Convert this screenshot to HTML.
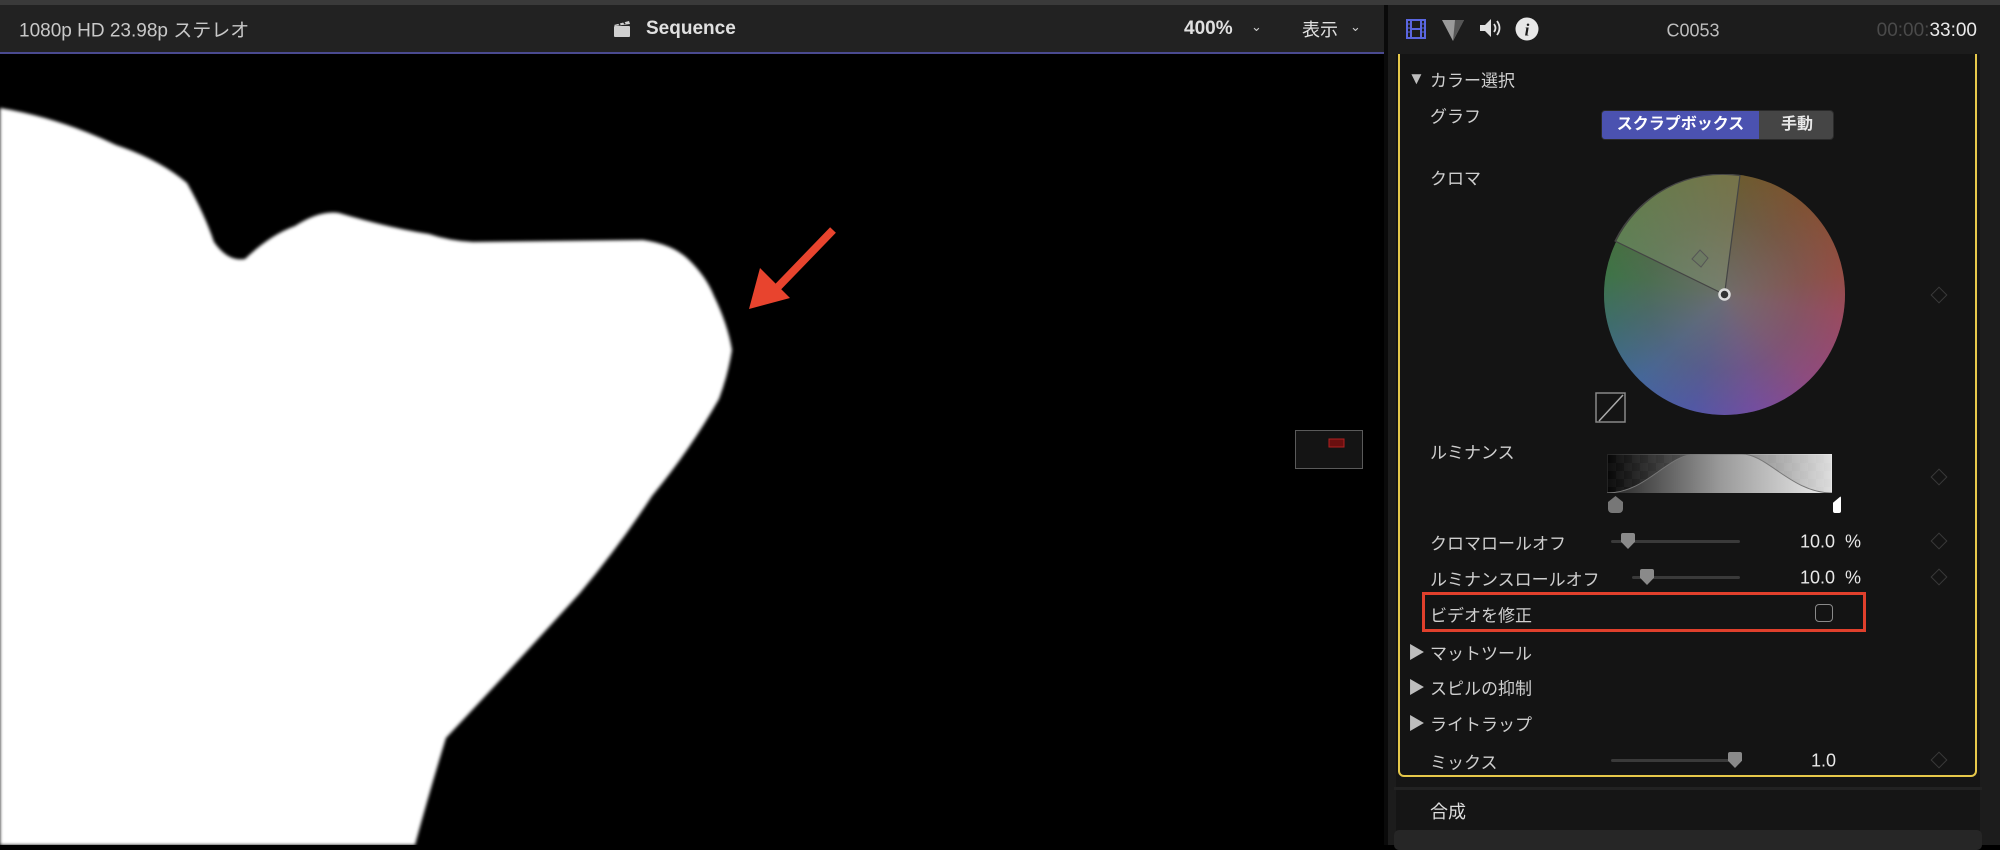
<!DOCTYPE html>
<html><head><meta charset="utf-8"><style>
*{margin:0;padding:0;box-sizing:border-box}
body{width:2000px;height:845px;overflow:hidden;background:#000;font-family:"Liberation Sans","Noto Sans CJK JP",sans-serif;color:#d0d0d0;position:relative}
.a{position:absolute;white-space:nowrap}
.lbl{font-size:17px;color:#cfcfcf;transform:translateY(-50%)}
.dia{position:absolute;width:12px;height:12px;border:1.5px solid #3a3a3a;transform:translate(-50%,-50%) rotate(45deg)}
.tri{position:absolute;font-size:17px;color:#bdbdbd;transform:translateY(-50%)}
.track{position:absolute;height:3px;background:#3a3a3a;border-radius:2px}
.thumb{position:absolute;width:14px;height:16px;background:#8a8a8a;clip-path:polygon(0 0,100% 0,100% 55%,50% 100%,0 55%);transform:translate(-50%,-50%);border-radius:2px}
</style></head><body>
<div class="a" style="left:0;top:0;width:2000px;height:5px;background:#3a3a3a"></div>
<div class="a" style="left:0;top:5px;width:1384px;height:47px;background:#222"></div>
<div class="a" style="left:0;top:52px;width:1384px;height:2px;background:#4a4a90"></div>
<div class="a lbl" style="left:19px;top:29px;font-size:19px;color:#c8c8c8">1080p HD 23.98p ステレオ</div>
<svg class="a" style="left:613px;top:20px" width="18" height="18" viewBox="0 0 18 18"><rect x="1" y="6" width="16" height="11" rx="1" fill="#cfcfcf"/><path d="M1 5 L16 1 L17 4 L2 6Z" fill="#cfcfcf"/><path d="M5 2 L7 5 M10 1 L12 4" stroke="#222" stroke-width="1.5"/></svg>
<div class="a lbl" style="left:646px;top:29px;font-size:19px;color:#e0e0e0;font-weight:bold">Sequence</div>
<div class="a lbl" style="left:1184px;top:29px;font-size:19px;color:#e0e0e0;font-weight:bold">400%</div>
<div class="a lbl" style="left:1251px;top:27px;font-size:13px;color:#ccc">⌄</div>
<div class="a lbl" style="left:1302px;top:29px;font-size:18px;color:#e0e0e0">表示</div>
<div class="a lbl" style="left:1350px;top:27px;font-size:13px;color:#ccc">⌄</div>
<svg class="a" style="left:0;top:54px" width="1384" height="791" viewBox="0 54 1384 791">
<path d="M0 108 Q60 118 116 145 Q160 160 187 183 Q205 215 214 242 Q228 262 245 259 Q270 235 295 226 Q320 210 339 213 Q390 228 429 234 Q450 241 473 242 L643 240 Q672 244 688 259 Q706 276 714 296 Q728 325 732 350 Q728 375 719 399 Q690 450 652 496 Q620 545 580 593 Q510 670 446 738 Q430 790 415 845 L0 845Z" fill="#fff" style="filter:blur(1.5px)"/>
<path d="M833 230 L775 290" stroke="#e8442e" stroke-width="8"/>
<path d="M749 309 L760 268 L790 298Z" fill="#e8442e"/>
<rect x="1295.5" y="430.5" width="67" height="38" fill="#141414" stroke="#5a5a5a"/>
<rect x="1329" y="439" width="15" height="8" fill="#6a0f0f" stroke="#b02020"/>
</svg>
<div class="a" style="left:1384px;top:5px;width:616px;height:840px;background:#1c1c1c"></div>
<div class="a" style="left:1384px;top:5px;width:4px;height:840px;background:#0a0a0a"></div>
<div class="a" style="left:1396px;top:54px;width:584px;height:791px;background:#151515"></div>
<svg class="a" style="left:1405px;top:18px" width="22" height="22" viewBox="0 0 22 22"><rect x="2" y="2" width="18" height="18" fill="none" stroke="#5a66e0" stroke-width="2"/><path d="M6 2V20M16 2V20M6 11H16" stroke="#5a66e0" stroke-width="2"/><path d="M2 6h4M2 10h4M2 14h4M16 6h4M16 10h4M16 14h4" stroke="#5a66e0"/></svg>
<svg class="a" style="left:1441px;top:18px" width="24" height="24" viewBox="0 0 24 24"><path d="M1 2 L23 2 L12 23Z" fill="#9a9a9a"/><path d="M12 23 L23 2 L14 2Z" fill="#555"/></svg>
<svg class="a" style="left:1478px;top:17px" width="26" height="22" viewBox="0 0 26 22"><path d="M2 8h5l6-6v18l-6-6H2z" fill="#e0e0e0"/><path d="M16 7q3 4 0 8M19 4q5 7 0 14" stroke="#e0e0e0" stroke-width="1.8" fill="none"/></svg>
<svg class="a" style="left:1515px;top:17px" width="24" height="24" viewBox="0 0 24 24"><circle cx="12" cy="12" r="11.5" fill="#e8e8e8"/><text x="12" y="18.5" font-size="17" font-style="italic" font-weight="bold" font-family="Liberation Serif,serif" text-anchor="middle" fill="#1c1c1c">i</text></svg>
<div class="a lbl" style="left:1693px;top:31px;font-size:18px;color:#bdbdbd;transform:translate(-50%,-50%)">C0053</div>
<div class="a lbl" style="right:23px;top:31px;font-size:19px;color:#eaeaea"><span style="color:#4a4a4a">00:00:</span>33:00</div>
<div class="a" style="left:1398px;top:54px;width:579px;height:723px;border:2px solid #e6c84a;border-top:none;border-radius:0 0 6px 6px;background:#141414"></div>
<div class="tri a" style="left:1408px;top:79px">▼</div>
<div class="a lbl" style="left:1430px;top:79px">カラー選択</div>
<div class="a lbl" style="left:1430px;top:115px">グラフ</div>
<div class="a" style="left:1601px;top:110px;width:233px;height:30px;border-radius:4px;background:#454545;overflow:hidden;border:1px solid #2a2a2a">
<div style="position:absolute;left:0;top:0;width:157px;height:30px;background:#4b52b0;color:#fff;font-size:16px;font-weight:bold;line-height:28px;text-align:center">スクラプボックス</div>
<div style="position:absolute;left:157px;top:0;width:76px;height:30px;color:#e8e8e8;font-size:16px;font-weight:bold;line-height:28px;text-align:center">手動</div></div>
<div class="a lbl" style="left:1430px;top:177px">クロマ</div>
<div class="a" style="left:1604px;top:174px;width:241px;height:241px;border-radius:50%;background:conic-gradient(from 0deg,#6a5a18,#8a4a1e 40deg,#a84438 80deg,#b0405e 100deg,#a0408a 135deg,#7a44b8 165deg,#4a52c0 195deg,#3868b0 225deg,#2e7070 255deg,#2e7a3a 280deg,#4a6a28 320deg,#6a5a18)"></div>
<div class="a" style="left:1604px;top:174px;width:241px;height:241px;border-radius:50%;background:radial-gradient(circle,rgba(110,110,110,0.95) 0%,rgba(100,100,100,0.55) 45%,rgba(90,90,90,0) 100%)"></div>
<svg class="a" style="left:1604px;top:174px" width="241" height="241" viewBox="0 0 241 241"><path d="M120.5 120.5 L11 67 A120 120 0 0 1 136 1.5Z" fill="rgba(140,160,120,0.35)" stroke="#444" stroke-width="1.2"/><path d="M96 76 L104 84 L97 93 L88 85Z" fill="#6c7a62" stroke="#555"/><circle cx="120.5" cy="120.5" r="5" fill="#333" stroke="#ddd" stroke-width="2.5"/></svg>
<div class="dia" style="left:1939px;top:295px"></div>
<svg class="a" style="left:1595px;top:392px" width="31" height="31" viewBox="0 0 31 31"><rect x="1" y="1" width="29" height="29" fill="none" stroke="#888" stroke-width="1.5"/><path d="M4 29 L28 3" stroke="#aaa" stroke-width="1.5"/></svg>
<div class="a lbl" style="left:1430px;top:451px">ルミナンス</div>
<div class="a" style="left:1607px;top:454px;width:225px;height:39px;border:1.5px solid #5a5a5a;background:repeating-conic-gradient(#222 0 25%,#111 0 50%) 0 0/16px 16px"></div>
<div class="a" style="left:1607px;top:454px;width:225px;height:39px;background:linear-gradient(90deg,rgba(0,0,0,0.6),rgba(255,255,255,0.85))"></div>
<svg class="a" style="left:1607px;top:454px" width="225" height="39" viewBox="0 0 225 39"><path d="M0 39 C40 39 60 0 90 0 L135 0 C160 0 185 39 225 39Z" fill="url(#g)"/><defs><linearGradient id="g"><stop offset="0" stop-color="#222"/><stop offset="0.5" stop-color="#999"/><stop offset="1" stop-color="#eee"/></linearGradient></defs><path d="M0 39 C40 39 60 0 90 0 L135 0 C160 0 185 39 225 39" fill="none" stroke="#777"/></svg>
<div class="a" style="left:1608px;top:496px;width:15px;height:17px;background:#777;border-radius:3px 3px 4px 4px;clip-path:polygon(50% 0,100% 35%,100% 100%,0 100%,0 35%)"></div>
<div class="a" style="left:1833px;top:496px;width:8px;height:17px;background:#fff;border-radius:2px;clip-path:polygon(100% 0,100% 100%,0 100%,0 40%)"></div>
<div class="dia" style="left:1939px;top:477px"></div>
<div class="a lbl" style="left:1430px;top:542px">クロマロールオフ</div>
<div class="track" style="left:1611px;top:540px;width:129px"></div><div class="thumb" style="left:1628px;top:541px"></div>
<div class="a lbl" style="right:139px;top:542px;font-size:18px;color:#e8e8e8">10.0&nbsp;&nbsp;%</div>
<div class="dia" style="left:1939px;top:541px"></div>
<div class="a lbl" style="left:1430px;top:578px">ルミナンスロールオフ</div>
<div class="track" style="left:1632px;top:576px;width:108px"></div><div class="thumb" style="left:1647px;top:577px"></div>
<div class="a lbl" style="right:139px;top:578px;font-size:18px;color:#e8e8e8">10.0&nbsp;&nbsp;%</div>
<div class="dia" style="left:1939px;top:577px"></div>
<div class="a" style="left:1422px;top:592px;width:444px;height:40px;border:3.5px solid #e0402c"></div>
<div class="a lbl" style="left:1430px;top:614px">ビデオを修正</div>
<div class="a" style="left:1815px;top:604px;width:18px;height:18px;border:1.5px solid #8a8a8a;border-radius:4px"></div>
<div class="tri a" style="left:1408px;top:651px">▶</div><div class="a lbl" style="left:1430px;top:652px">マットツール</div>
<div class="tri a" style="left:1408px;top:686px">▶</div><div class="a lbl" style="left:1430px;top:687px">スピルの抑制</div>
<div class="tri a" style="left:1408px;top:722px">▶</div><div class="a lbl" style="left:1430px;top:723px">ライトラップ</div>
<div class="a lbl" style="left:1430px;top:761px">ミックス</div>
<div class="track" style="left:1611px;top:759px;width:129px"></div><div class="thumb" style="left:1735px;top:760px"></div>
<div class="a lbl" style="left:1811px;top:761px;font-size:18px;color:#e8e8e8">1.0</div>
<div class="dia" style="left:1939px;top:760px"></div>
<div class="a" style="left:1394px;top:787px;width:588px;height:3px;background:#222"></div>
<div class="a lbl" style="left:1430px;top:811px;font-size:18px;color:#ddd">合成</div>
<div class="a" style="left:1394px;top:830px;width:588px;height:20px;background:#262626;border-radius:5px"></div>
</body></html>
